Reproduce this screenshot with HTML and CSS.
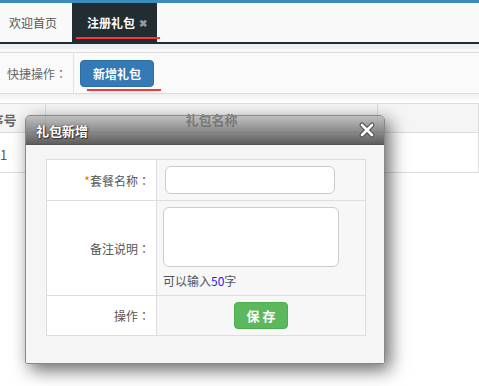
FILE: index.html
```html
<!DOCTYPE html>
<html lang="zh-CN">
<head>
    <meta charset="UTF-8">
    <meta name="viewport" content="width=device-width, initial-scale=1.0">
    <title>注册礼包</title>
    <link rel="stylesheet" href="styles.css">
</head>
<body>
    <div class="topbar"></div>
    <div class="tabs">
        <div class="tab">欢迎首页</div>
        <div class="tab active">注册礼包 <span class="tab-close">✖</span></div>
    </div>
    <div class="strip"></div>
    <div class="toolbar">
        <div class="toolbar-label">快捷操作<span class="colon">：</span></div>
        <div class="toolbar-actions">
            <button class="btn-add">新增礼包</button>
        </div>
    </div>

    <div class="content">
        <div class="grid">
            <div class="cell head">序号</div>
            <div class="cell head">礼包名称</div>
            <div class="cell head"></div>
            <div class="cell">1</div>
            <div class="cell"></div>
            <div class="cell"></div>
        </div>
    </div>

    <div class="dialog">
        <div class="dialog-title">
            <span>礼包新增</span>
            <svg class="dialog-close" width="18" height="18" viewBox="0 0 18 18">
                <path d="M4 4 L14 14 M14 4 L4 14" stroke="#555" stroke-width="5" stroke-linecap="round"/>
                <path d="M4 4 L14 14 M14 4 L4 14" stroke="#fff" stroke-width="2.6" stroke-linecap="round"/>
            </svg>
        </div>
        <div class="dialog-body">
            <div class="form">
                <div class="form-label"><span class="req">*</span>套餐名称<span class="colon">：</span></div>
                <div class="form-value">
                    <input type="text" class="input">
                </div>
                <div class="form-label">备注说明<span class="colon">：</span></div>
                <div class="form-value col">
                    <textarea class="textarea"></textarea>
                    <div class="hint">可以输入<span class="num">50</span>字</div>
                </div>
                <div class="form-label">操作<span class="colon">：</span></div>
                <div class="form-value center">
                    <button class="btn-save">保 存</button>
                </div>
            </div>
        </div>
    </div>
</body>
</html>
```

FILE: styles.css
```css
body {
    margin: 0;
    font-family: "Noto Sans CJK SC", "Liberation Sans", sans-serif;
    font-size: 12px;
    color: #555;
    background: #fff;
    overflow: hidden;
    height: 386px;
    position: relative;
}
.colon {
    font-family: "Noto Sans CJK TC", sans-serif;
}
.topbar {
    height: 3px;
    background: #3c8dbc;
}
.tabs {
    display: flex;
    height: 39px;
    background: #f9f9f9;
    border-bottom: 2px solid #222d32;
}
.tab {
    display: flex;
    align-items: center;
    padding: 0 15px 0 9px;
    width: 48px;
    color: #555;
    white-space: nowrap;
}
.tab.active {
    position: relative;
    width: 85px;
    box-sizing: border-box;
    padding-left: 15px;
    padding-right: 0;
    background: #222d32;
    color: #fff;
    font-weight: bold;
}
.tab.active::after {
    content: "";
    position: absolute;
    left: 4px;
    top: 34px;
    width: 84px;
    height: 2px;
    background: #ff3333;
}
.tab-close {
    margin-left: 4px;
    color: #999;
    font-size: 10px;
}
.strip {
    height: 8px;
    background: linear-gradient(#ecf0f5 5px, #f9f9f9 5px);
    border-bottom: 1px solid #ddd;
}
.toolbar {
    display: flex;
    height: 40px;
    background: #fafafa;
    border-bottom: 1px solid #ddd;
}
.toolbar-label {
    display: flex;
    align-items: center;
    width: 66px;
    padding-left: 7px;
    border-right: 1px solid #e3e3e3;
    color: #666;
    white-space: nowrap;
}
.toolbar-actions {
    display: flex;
    align-items: center;
    padding-left: 6px;
}
.btn-add {
    position: relative;
    width: 74px;
    height: 27px;
    background: #337ab7;
    border: 1px solid #2e6da4;
    border-radius: 4px;
    color: #fff;
    font-family: inherit;
    font-size: 12px;
    font-weight: bold;
}
.btn-add::after {
    content: "";
    position: absolute;
    left: 6px;
    top: 28px;
    width: 74px;
    height: 2px;
    background: #ff3333;
}
.content {
    padding-top: 9px;
    background: linear-gradient(#f0f0f0, #fff 9px);
    overflow: hidden;
}
.grid {
    display: grid;
    grid-template-columns: 84px 332px 1fr;
    grid-template-rows: 29px 40px;
    margin-left: -38px;
    border-top: 1px solid #ddd;
}
.cell {
    display: flex;
    align-items: center;
    justify-content: center;
    border-bottom: 1px solid #ddd;
    border-right: 1px solid #ddd;
    color: #555;
    font-size: 13px;
    padding-top: 3px;
}
.cell.head {
    background: #f5f5f5;
    font-weight: bold;
    color: #666;
    align-items: flex-start;
    padding-top: 6px;
}
.dialog {
    position: absolute;
    left: 25px;
    top: 115px;
    width: 360px;
    height: 249px;
    box-sizing: border-box;
    display: flex;
    flex-direction: column;
    border: 1px solid #888;
    border-radius: 5px 5px 2px 2px;
    box-shadow: 5px 6px 18px rgba(0, 0, 0, 0.6);
    overflow: hidden;
}
.dialog-title {
    display: flex;
    align-items: center;
    justify-content: space-between;
    height: 28px;
    padding: 0 8px 0 10px;
    background: linear-gradient(rgba(150, 150, 150, 0.55), rgba(115, 115, 115, 0.75) 45%, rgba(85, 85, 85, 0.95));
    border-bottom: 1px solid #555;
    color: #fff;
    font-size: 13px;
    font-weight: bold;
    text-shadow: 0 0 2px #333, 1px 1px 1px #333;
}
.dialog-close {
    display: block;
}
.dialog-body {
    flex: 1;
    padding: 14px 18px 0 20px;
    background: #f5f5f5;
}
.form {
    display: grid;
    grid-template-columns: 110px 1fr;
    grid-template-rows: 41px 95px 40px;
    border-top: 1px solid #ddd;
    border-left: 1px solid #ddd;
}
.form-label {
    display: flex;
    align-items: center;
    justify-content: flex-end;
    padding-right: 6px;
    background: #fff;
    border-right: 1px solid #ddd;
    border-bottom: 1px solid #ddd;
    color: #555;
    white-space: nowrap;
}
.req {
    color: #f60;
}
.form-value {
    display: flex;
    align-items: center;
    padding-left: 8px;
    background: #f7f7f7;
    border-right: 1px solid #ddd;
    border-bottom: 1px solid #ddd;
}
.form-value.col {
    flex-direction: column;
    align-items: flex-start;
    padding-left: 6px;
    padding-top: 6px;
}
.form-value.center {
    justify-content: center;
    padding-left: 0;
}
.input {
    width: 170px;
    height: 28px;
    box-sizing: border-box;
    border: 1px solid #ccc;
    border-radius: 6px;
    background: #fff;
}
.textarea {
    width: 176px;
    height: 60px;
    box-sizing: border-box;
    border: 1px solid #ccc;
    border-radius: 6px;
    background: #fff;
    resize: none;
    margin: 0;
}
.hint {
    margin-top: 5px;
    color: #555;
}
.num {
    color: #2222ee;
}
.btn-save {
    width: 54px;
    height: 27px;
    background: #5cb85c;
    border: 1px solid #4cae4c;
    border-radius: 4px;
    color: #fff;
    font-family: inherit;
    font-size: 13px;
    font-weight: bold;
}
```
